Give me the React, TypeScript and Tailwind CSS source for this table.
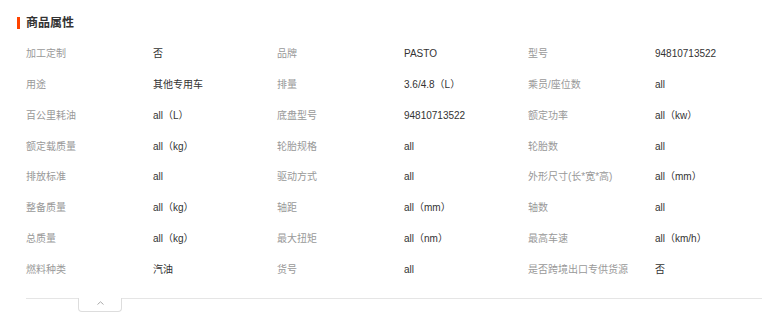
import React from "react";

type Attr = { label: string; value: string };

const attrs: Attr[] = [
  { label: "加工定制", value: "否" },
  { label: "品牌", value: "PASTO" },
  { label: "型号", value: "94810713522" },
  { label: "用途", value: "其他专用车" },
  { label: "排量", value: "3.6/4.8（L）" },
  { label: "乘员/座位数", value: "all" },
  { label: "百公里耗油", value: "all（L）" },
  { label: "底盘型号", value: "94810713522" },
  { label: "额定功率", value: "all（kw）" },
  { label: "额定载质量", value: "all（kg）" },
  { label: "轮胎规格", value: "all" },
  { label: "轮胎数", value: "all" },
  { label: "排放标准", value: "all" },
  { label: "驱动方式", value: "all" },
  { label: "外形尺寸(长*宽*高)", value: "all（mm）" },
  { label: "整备质量", value: "all（kg）" },
  { label: "轴距", value: "all（mm）" },
  { label: "轴数", value: "all" },
  { label: "总质量", value: "all（kg）" },
  { label: "最大扭矩", value: "all（nm）" },
  { label: "最高车速", value: "all（km/h）" },
  { label: "燃料种类", value: "汽油" },
  { label: "货号", value: "all" },
  { label: "是否跨境出口专供货源", value: "否" },
];

export default function App() {
  return (
    <div
      className="w-[762px] h-[314px] overflow-hidden bg-white pl-[17px] pt-[17px]"
      style={{ fontFamily: '"Liberation Sans", "Noto Sans CJK SC", sans-serif' }}
    >
      {/* section title */}
      <div className="flex items-center h-[12px]">
        <span className="w-[3px] h-[12px] bg-[#ff4400]" />
        <span className="ml-[6px] text-[12px] leading-[12px] font-bold text-[#333]">商品属性</span>
      </div>

      {/* attribute table */}
      <div className="ml-[9px] mt-[9px] grid grid-cols-[127px_124px_127px_124px_127px_124px]">
        {attrs.map((a) => (
          <React.Fragment key={a.label}>
            <div className="h-[30.86px] flex items-center text-[10px] text-[#999] whitespace-nowrap">{a.label}</div>
            <div className="h-[30.86px] flex items-center text-[10px] text-[#333] whitespace-nowrap">{a.value}</div>
          </React.Fragment>
        ))}
      </div>

      {/* divider + collapse tab */}
      <div className="ml-[9px] mt-[13px] border-t border-[#e5e5e5]">
        <div className="ml-[52px] -mt-px w-[44px] h-[14px] border border-t-0 border-[#ddd] rounded-b-[4px] bg-white flex items-center justify-center">
          <svg width="7" height="4" viewBox="0 0 7 4" className="mb-[3px]">
            <path d="M0.5 3.5 L3.5 0.8 L6.5 3.5" fill="none" stroke="#aaa" strokeWidth="1" />
          </svg>
        </div>
      </div>
    </div>
  );
}
